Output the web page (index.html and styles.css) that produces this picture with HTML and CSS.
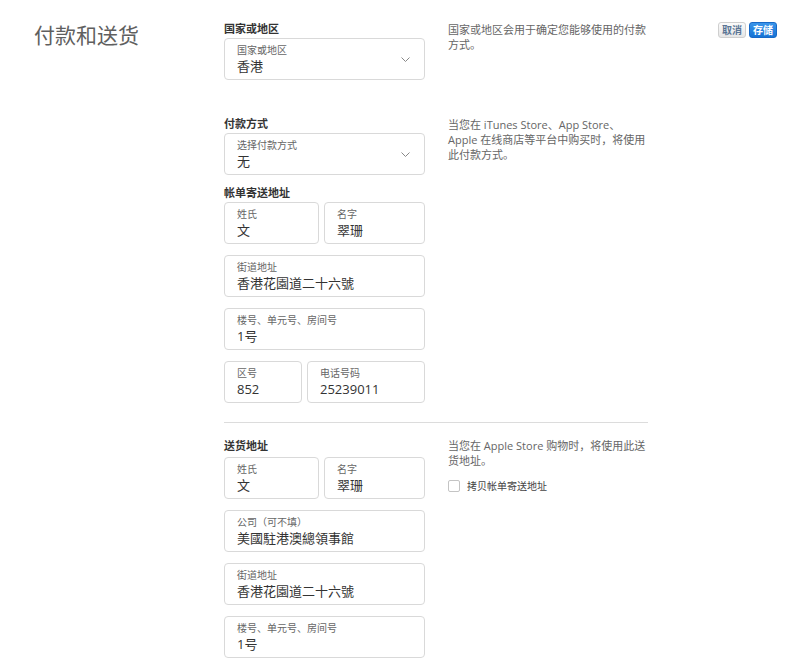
FILE: index.html
```html
<!DOCTYPE html>
<html lang="zh-CN">
<head>
<meta charset="utf-8">
<title>付款和送货</title>
<link rel="stylesheet" href="styles.css">
</head>
<body>
<div class="page">
  <div class="title-col"><h1 class="title">付款和送货</h1></div>
  <div class="form">
    <section class="section">
      <div class="fields">
        <div class="group-label">国家或地区</div>
        <div class="box select">
          <div class="box-label">国家或地区</div>
          <div class="box-value">香港</div>
          <svg class="chevron" width="9" height="5" viewBox="0 0 9 5"><polyline points="0.5,0.5 4.5,4.5 8.5,0.5" fill="none" stroke="#888" stroke-width="1"/></svg>
        </div>
      </div>
      <p class="note">国家或地区会用于确定您能够使用的付款方式。</p>
    </section>

    <section class="section section-payment">
      <div class="fields">
        <div class="group-label">付款方式</div>
        <div class="box select">
          <div class="box-label">选择付款方式</div>
          <div class="box-value">无</div>
          <svg class="chevron" width="9" height="5" viewBox="0 0 9 5"><polyline points="0.5,0.5 4.5,4.5 8.5,0.5" fill="none" stroke="#888" stroke-width="1"/></svg>
        </div>
        <div class="group-label">帐单寄送地址</div>
        <div class="row row-name">
          <div class="box"><div class="box-label">姓氏</div><div class="box-value">文</div></div>
          <div class="box"><div class="box-label">名字</div><div class="box-value">翠珊</div></div>
        </div>
        <div class="box"><div class="box-label">街道地址</div><div class="box-value">香港花園道二十六號</div></div>
        <div class="box"><div class="box-label">楼号、单元号、房间号</div><div class="box-value">1号</div></div>
        <div class="row row-phone">
          <div class="box"><div class="box-label">区号</div><div class="box-value">852</div></div>
          <div class="box"><div class="box-label">电话号码</div><div class="box-value">25239011</div></div>
        </div>
      </div>
      <p class="note">当您在 iTunes Store、App Store、Apple 在线商店等平台中购买时，将使用此付款方式。</p>
    </section>

    <hr class="divider">

    <section class="section">
      <div class="fields">
        <div class="group-label ship">送货地址</div>
        <div class="row row-name">
          <div class="box"><div class="box-label">姓氏</div><div class="box-value">文</div></div>
          <div class="box"><div class="box-label">名字</div><div class="box-value">翠珊</div></div>
        </div>
        <div class="box"><div class="box-label">公司（可不填）</div><div class="box-value">美國駐港澳總領事館</div></div>
        <div class="box"><div class="box-label">街道地址</div><div class="box-value">香港花園道二十六號</div></div>
        <div class="box"><div class="box-label">楼号、单元号、房间号</div><div class="box-value">1号</div></div>
      </div>
      <div class="note-wrap">
        <p class="note">当您在 Apple Store 购物时，将使用此送货地址。</p>
        <label class="check"><span class="checkbox"></span><span class="check-text">拷贝帐单寄送地址</span></label>
      </div>
    </section>
  </div>
  <div class="actions">
    <button class="btn btn-cancel" type="button">取消</button>
    <button class="btn btn-save" type="button">存储</button>
  </div>
</div>
</body>
</html>
```

FILE: styles.css
```css
* { box-sizing: border-box; }
html, body { margin: 0; padding: 0; background: #fff; }
body {
  font-family: "Open Sans", "Noto Sans CJK SC", sans-serif;
  color: #333;
}
.page {
  display: flex;
  align-items: flex-start;
  padding-top: 22px;
}
.title-col {
  width: 224px;
  flex: none;
  padding-left: 34px;
}
.title {
  margin: 0;
  font-size: 21px;
  line-height: 26px;
  font-weight: 400;
  color: #5f5f5f;
}
.form {
  width: 424px;
  flex: none;
}
.section {
  display: grid;
  grid-template-columns: 201px 200px;
  column-gap: 23px;
  align-items: start;
}
.section-payment { margin-top: 37px; }
.fields {
  display: flex;
  flex-direction: column;
  gap: 11px;
}
.group-label {
  font-size: 11px;
  line-height: 14px;
  font-weight: 700;
  color: #333;
  margin-bottom: -9px;
}
.group-label.ship { margin-top: 16px; margin-bottom: -7px; }
.box {
  position: relative;
  height: 42px;
  border: 1px solid #d9d9d9;
  border-radius: 4px;
  padding: 5px 12px 4px;
}
.box-label {
  font-size: 10px;
  line-height: 13px;
  color: #666;
  white-space: nowrap;
}
.box-value {
  font-size: 13px;
  line-height: 18px;
  color: #333;
  white-space: nowrap;
}
.chevron {
  position: absolute;
  right: 14px;
  top: 18px;
}
.row {
  display: grid;
  gap: 5px;
}
.row-name { grid-template-columns: 95px 1fr; }
.row-phone { grid-template-columns: 78px 1fr; }
.divider {
  margin: 19px 0 0;
  border: 0;
  border-top: 1px solid #dcdcdc;
  height: 0;
}
.note {
  margin: 0;
  font-size: 11px;
  line-height: 15px;
  color: #666;
}
.note-wrap .note { margin-top: 15px; }
.check {
  display: flex;
  align-items: center;
  gap: 7px;
  margin-top: 12px;
}
.checkbox {
  width: 12px;
  height: 12px;
  border: 1px solid #c4c4c4;
  border-radius: 2px;
  background: #fff;
}
.check-text {
  font-size: 10px;
  line-height: 12px;
  color: #444;
}
.actions {
  flex: 1;
  display: flex;
  justify-content: flex-end;
  gap: 3px;
  padding-right: 23px;
}
.btn {
  font-family: inherit;
  font-size: 10px;
  line-height: 14px;
  font-weight: 700;
  height: 16px;
  padding: 0 3px;
  border-radius: 3px;
  cursor: pointer;
}
.btn-cancel {
  color: #5a7595;
  background: linear-gradient(#fbfbfb, #e6e6e6);
  border: 1px solid #cfcfcf;
}
.btn-save {
  color: #fff;
  background: linear-gradient(#3a95ea, #1673d5);
  border: 1px solid #1769c7;
}
```
